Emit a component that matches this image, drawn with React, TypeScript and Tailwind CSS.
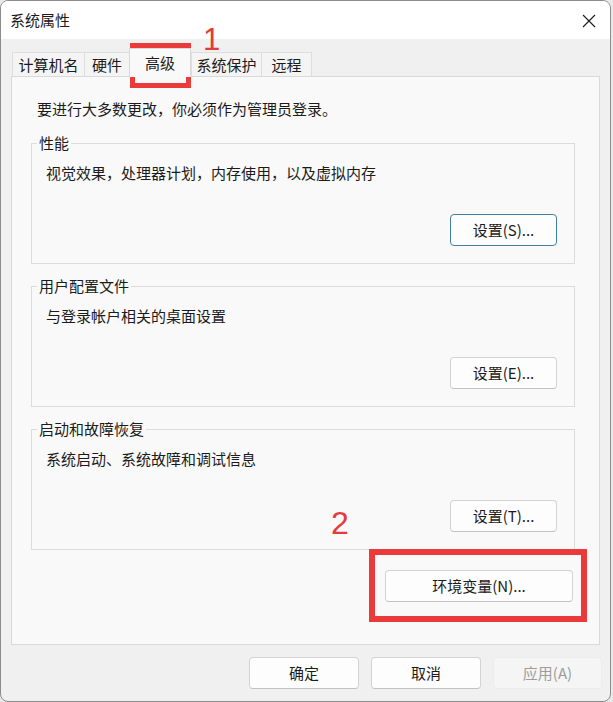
import React from 'react'

const font = 'font-["Noto_Sans_CJK_SC",sans-serif]'

const tabs = [
  { label: '计算机名', w: 'w-[72px]' },
  { label: '硬件', w: 'w-[45px]' },
  { label: '高级', w: 'w-[62px]', active: true },
  { label: '系统保护', w: 'w-[70px]' },
  { label: '远程', w: 'w-[51px]' },
]

const groups = [
  { title: '性能', text: '视觉效果，处理器计划，内存使用，以及虚拟内存', button: '设置(S)...', focused: true },
  { title: '用户配置文件', text: '与登录帐户相关的桌面设置', button: '设置(E)...' },
  { title: '启动和故障恢复', text: '系统启动、系统故障和调试信息', button: '设置(T)...' },
]

function Button({ children, className = '', focused = false, disabled = false }: { children: React.ReactNode; className?: string; focused?: boolean; disabled?: boolean }) {
  return (
    <button
      className={`flex h-[32px] items-center justify-center rounded-[4px] border text-[15px] leading-[20px] ${
        focused
          ? 'border-[#3f7fa0] bg-[#fdfdfd] text-[#1b1b1b]'
          : disabled
            ? 'border-[#ececec] bg-[#f5f5f5] text-[#9d9d9d]'
            : 'border-[#d3d3d3] border-b-[#c2c2c2] bg-[#fdfdfd] text-[#1b1b1b]'
      } ${className}`}
    >
      {children}
    </button>
  )
}

export default function App() {
  return (
    <div className={`relative h-[702px] w-[613px] bg-[#e9e9e9] ${font}`}>
      <div className="flex h-[702px] w-[611px] flex-col overflow-hidden rounded-[8px] border border-[#8c8c8c] bg-[#f0f0f0]">
        {/* title bar */}
        <div className="flex h-[38px] shrink-0 items-center justify-between bg-white pl-[9px] pr-[14px]">
          <span className="text-[15px] leading-[20px] text-[#1b1b1b]">系统属性</span>
          <svg width="14" height="14" viewBox="0 0 14 14" className="mt-[1px]">
            <path d="M1 1 L13 13 M13 1 L1 13" stroke="#1b1b1b" strokeWidth="1.1" fill="none" />
          </svg>
        </div>

        <div className="flex flex-col px-[10px]">
          {/* tabs */}
          <div className="mt-[9px] flex h-[28px] items-end pl-[1px]">
            {tabs.map((t) =>
              t.active ? (
                <div
                  key={t.label}
                  className={`relative z-10 -mb-[1px] flex h-[29px] ${t.w} items-start justify-center border border-b-0 border-[#d9d9d9] bg-[#f9f9f9] pt-[4px] text-[15px] leading-[20px] text-[#1b1b1b]`}
                >
                  {t.label}
                </div>
              ) : (
                <div
                  key={t.label}
                  className={`flex h-[24px] ${t.w} items-center justify-center border border-b-0 border-r-0 border-[#dedede] bg-[#f4f4f4] text-[15px] leading-[20px] text-[#1b1b1b] last:border-r`}
                >
                  {t.label}
                </div>
              )
            )}
          </div>

          {/* panel */}
          <div className="flex h-[569px] flex-col border border-[#d9d9d9] bg-[#f9f9f9] pl-[19px] pr-[24px] pt-[22px]">
            <p className="pl-[6px] text-[15px] leading-[20px] text-[#1b1b1b]">要进行大多数更改，你必须作为管理员登录。</p>

            {groups.map((g, i) => (
              <fieldset
                key={g.title}
                className={`flex flex-col border border-[#dcdcdc] pb-[17px] pl-[14px] pr-[17px] ${i === 0 ? 'mt-[14px]' : 'mt-[12px]'}`}
              >
                <legend className="-ml-[9px] px-[2px] text-[15px] leading-[20px] text-[#1b1b1b]">{g.title}</legend>
                <p className="mt-[10px] text-[15px] leading-[20px] text-[#1b1b1b]">{g.text}</p>
                <div className="mt-[31px] flex justify-end">
                  <Button className="w-[107px]" focused={g.focused}>
                    {g.button}
                  </Button>
                </div>
              </fieldset>
            ))}

            <div className="mt-[20px] flex justify-end pr-[2px]">
              <Button className="w-[188px]">环境变量(N)...</Button>
            </div>
          </div>

          {/* footer buttons */}
          <div className="-mr-[2px] mt-[12px] flex justify-end gap-[12px]">
            <Button className="w-[110px]">确定</Button>
            <Button className="w-[110px]">取消</Button>
            <Button className="w-[109px]" disabled>
              应用(A)
            </Button>
          </div>
        </div>
      </div>

      {/* annotations */}
      <div className="absolute left-[130px] top-[43px] h-[45px] w-[61px] border-[5px] border-[#ea3a3a]" />
      <span className="absolute left-[203px] top-[24px] font-['Liberation_Sans',sans-serif] text-[31px] leading-[32px] text-[#e53a3a]">1</span>
      <div className="absolute left-[369px] top-[549px] h-[73px] w-[218px] border-[6px] border-[#ea3a3a]" />
      <span className="absolute left-[331px] top-[507px] font-['Liberation_Sans',sans-serif] text-[32px] leading-[32px] text-[#e53a3a]">2</span>
    </div>
  )
}
